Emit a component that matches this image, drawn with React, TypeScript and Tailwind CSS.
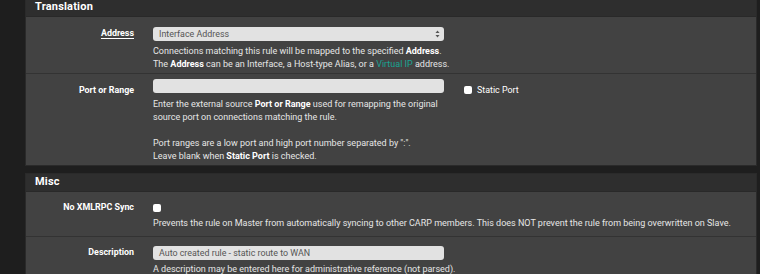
import React from 'react';

const font = { fontFamily: 'Roboto, "Liberation Sans", sans-serif' };

const help = 'text-[9px] leading-[13px] text-[#e6e6e6]';
const labelCls = 'w-[108px] shrink-0 text-right text-[8.9px] font-bold text-white';

const SelectArrows = () => (
  <svg width="5" height="8" viewBox="0 0 5 8" className="absolute right-[4px] top-[3px]">
    <path d="M2.5 0.5 L4.5 3 L0.5 3 Z" fill="#555" />
    <path d="M2.5 7.5 L4.5 5 L0.5 5 Z" fill="#555" />
  </svg>
);

const Checkbox = () => <div className="w-[8px] h-[8px] shrink-0 rounded-[2px] bg-white" />;

const Input = ({ value, select }: { value?: string; select?: boolean }) => (
  <div className="relative w-[291px] h-[14px] rounded-[3px] bg-[#e2e2e2] px-[6px] text-[8.9px] leading-[14px] text-[#555]">
    {value}
    {select && <SelectArrows />}
  </div>
);

export default function App() {
  return (
    <div className="w-[760px] h-[274px] overflow-hidden bg-[#1e1e1e] pl-[25px] pr-[3px]" style={font}>
      {/* Translation */}
      <div className="bg-[#424242] border-x border-b border-[#2a2a2a]">
        <div className="h-[17px] bg-[#2e2e2e] border-b border-[#292929] flex items-center pb-[1px] pl-[9px] text-[11px] font-bold text-white tracking-[0.2px]">
          Translation
        </div>
        <div className="h-[57px] border-b border-[#333] flex gap-[19px]">
          <div className={`${labelCls} pt-[9px] leading-[14px]`}>
            <span className="underline underline-offset-[2px]">Address</span>
          </div>
          <div className="pt-[10px]">
            <Input value="Interface Address" select />
            <div className={`${help} mt-[4px]`}>
              Connections matching this rule will be mapped to the specified <b className="text-white">Address</b>.
              <br />
              The <b className="text-white">Address</b> can be an Interface, a Host-type Alias, or a{' '}
              <span className="text-[#1aa394]">Virtual IP</span> address.
            </div>
          </div>
        </div>
        <div className="h-[91px] flex gap-[19px]">
          <div className={`${labelCls} pt-[9px] leading-[14px]`}>Port or Range</div>
          <div className="pt-[5px]">
            <Input />
            <div className={`${help} mt-[5px]`}>
              Enter the external source <b className="text-white">Port or Range</b> used for remapping the original
              <br />
              source port on connections matching the rule.
              <br />
              <br />
              Port ranges are a low port and high port number separated by ":".
              <br />
              Leave blank when <b className="text-white">Static Port</b> is checked.
            </div>
          </div>
          <div className="pt-[12px] pl-[1px] flex items-start gap-[5px]">
            <Checkbox />
            <span className="text-[8.9px] leading-[8px] text-white">Static Port</span>
          </div>
        </div>
      </div>

      {/* Misc */}
      <div className="mt-[7px] bg-[#424242] border-x border-t border-[#2a2a2a]">
        <div className="h-[18px] bg-[#2e2e2e] border-b border-[#292929] flex items-center pl-[9px] text-[11px] font-bold text-white tracking-[0.2px]">
          Misc
        </div>
        <div className="h-[45px] border-b border-[#333] flex gap-[19px]">
          <div className={`${labelCls} pt-[8px] leading-[14px]`}>No XMLRPC Sync</div>
          <div className="pt-[12px]">
            <Checkbox />
            <div className={`${help} mt-[5px]`}>
              Prevents the rule on Master from automatically syncing to other CARP members. This does NOT prevent the rule
              from being overwritten on Slave.
            </div>
          </div>
        </div>
        <div className="h-[60px] flex gap-[19px]">
          <div className={`${labelCls} pt-[8px] leading-[14px]`}>Description</div>
          <div className="pt-[9px]">
            <Input value="Auto created rule - static route to WAN" />
            <div className={`${help} mt-[3px]`}>A description may be entered here for administrative reference (not parsed).</div>
          </div>
        </div>
      </div>
    </div>
  );
}
